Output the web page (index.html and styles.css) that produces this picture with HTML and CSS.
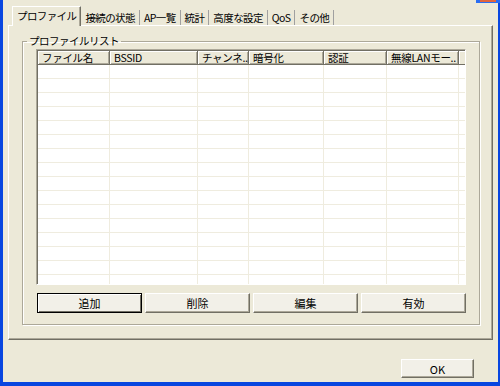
FILE: index.html
```html
<!DOCTYPE html>
<html lang="ja">
<head>
    <meta charset="UTF-8">
    <title>プロファイル</title>
    <link rel="stylesheet" href="styles.css">
</head>
<body>
    <div class="frame">
        <div class="caption-edge"><span class="close-edge"></span></div>
        <div class="window">
            <div class="tabs">
                <div class="tab active">プロファイル</div>
                <div class="tab">接続の状態</div>
                <div class="tab">AP一覧</div>
                <div class="tab">統計</div>
                <div class="tab">高度な設定</div>
                <div class="tab">QoS</div>
                <div class="tab">その他</div>
            </div>
            <div class="panel">
                <fieldset class="group">
                    <legend>プロファイルリスト</legend>
                    <div class="list">
                        <div class="list-head">
                            <div class="col c1">ファイル名</div>
                            <div class="col c2">BSSID</div>
                            <div class="col c3">チャンネ..</div>
                            <div class="col c4">暗号化</div>
                            <div class="col c5">認証</div>
                            <div class="col c6">無線LANモー..</div>
                            <div class="col c7"></div>
                        </div>
                        <div class="list-body">
                            <div class="grid-col c1"></div>
                            <div class="grid-col c2"></div>
                            <div class="grid-col c3"></div>
                            <div class="grid-col c4"></div>
                            <div class="grid-col c5"></div>
                            <div class="grid-col c6"></div>
                            <div class="grid-col c7"></div>
                        </div>
                    </div>
                    <div class="actions">
                        <button class="btn default">追加</button>
                        <button class="btn">削除</button>
                        <button class="btn">編集</button>
                        <button class="btn">有効</button>
                    </div>
                </fieldset>
            </div>
            <div class="footer">
                <button class="btn ok">OK</button>
            </div>
        </div>
    </div>
</body>
</html>
```

FILE: styles.css
```css
html, body {
    height: 386px;
    overflow: hidden;
}
body {
    margin: 0;
    padding: 0;
    font-family: "Noto Sans CJK JP", "DejaVu Sans", sans-serif;
    font-size: 11px;
    color: #000;
    background-color: #0846e0;
}
.frame {
    width: 500px;
    height: 386px;
    box-sizing: border-box;
    padding: 0 4px 4px 3px;
    background-color: #0846e0;
    position: relative;
    display: flex;
}
.caption-edge {
    position: absolute;
    top: 0;
    right: 0;
    width: 24px;
    height: 3px;
    background-color: #2a6df2;
}
.close-edge {
    position: absolute;
    top: 0;
    left: 4px;
    width: 16px;
    height: 2px;
    background-color: #e0643e;
}
.window {
    flex: 1;
    background-color: #ece9d8;
    display: flex;
    flex-direction: column;
    padding: 7px 5px 0 5px;
}
.tabs {
    display: flex;
    align-items: flex-end;
    height: 18px;
    padding-left: 4px;
    position: relative;
    z-index: 1;
}
.tab {
    height: 15px;
    line-height: 15px;
    padding: 0 4px 0 3px;
    border-right: 1px solid #a0a0a0;
    margin-right: 1px;
    white-space: nowrap;
    font-size: 10.5px;
    letter-spacing: -0.6px;
}
.tab.active {
    height: 19px;
    line-height: 17px;
    margin-bottom: -1px;
    padding: 0 4px 0 4px;
    background-color: #ece9d8;
    border-top: 1px solid #fff;
    border-left: 1px solid #fff;
    border-right: 1px solid #716f64;
    box-shadow: inset -1px 0 0 #aca899;
}
.panel {
    height: 315px;
    box-sizing: border-box;
    border-top: 1px solid #fff;
    border-left: 1px solid #fff;
    border-right: 1px solid #716f64;
    border-bottom: 1px solid #716f64;
    box-shadow: inset -1px -1px 0 #aca899;
    padding: 9px 12px 0 13px;
}
.group {
    margin: 0;
    height: 290px;
    box-sizing: border-box;
    border: 1px solid #aca899;
    box-shadow: 1px 1px 0 #fff, inset 1px 1px 0 #fff;
    padding: 2px 13px 0 13px;
}
.group legend {
    padding: 0 2px;
    margin-left: -9px;
    line-height: 12px;
    font-size: 10.5px;
    letter-spacing: -0.5px;
}
.list {
    height: 236px;
    box-sizing: border-box;
    border-top: 1px solid #aca899;
    border-left: 1px solid #aca899;
    border-right: 1px solid #fff;
    border-bottom: 1px solid #fff;
    box-shadow: inset 1px 1px 0 #716f64;
    background-color: #fff;
    display: flex;
    flex-direction: column;
    overflow: hidden;
}
.list-head {
    display: flex;
    height: 14px;
    background-color: #ece9d8;
    margin: 1px 0 0 1px;
}
.list-head .col {
    box-sizing: border-box;
    height: 14px;
    line-height: 14px;
    font-size: 10.5px;
    padding-left: 4px;
    border-right: 1px solid #716f64;
    border-bottom: 1px solid #716f64;
    box-shadow: inset 1px 1px 0 #fff, inset -1px -1px 0 #aca899;
    white-space: nowrap;
    letter-spacing: -0.3px;
}
.list-body {
    flex: 1;
    display: flex;
    margin-left: 1px;
    background-image: repeating-linear-gradient(to bottom, #fff 0, #fff 13px, #efecdf 13px, #efecdf 14px);
}
.grid-col {
    box-sizing: border-box;
    border-right: 1px solid #efecdf;
}
.c1 { width: 72px; }
.c2 { width: 88px; }
.c3 { width: 51px; }
.c4 { width: 75px; }
.c5 { width: 63px; }
.c6 { width: 72px; }
.c7 { flex: 1; border-right: none; }
.list-head .c7 { border-right: none; border-bottom: 1px solid #716f64; box-shadow: inset 1px 1px 0 #fff; }
.actions {
    display: flex;
    gap: 3px;
    margin-top: 8px;
    padding-left: 1px;
}
.btn {
    font-family: "Noto Sans CJK JP", "DejaVu Sans", sans-serif;
    font-size: 11px;
    height: 20px;
    width: 105px;
    padding: 0;
    background-color: #f2f0e8;
    border-top: 1px solid #fff;
    border-left: 1px solid #fff;
    border-right: 1px solid #716f64;
    border-bottom: 1px solid #716f64;
    box-shadow: inset -1px -1px 0 #aca899;
    color: #000;
}
.btn.default {
    border: 1px solid #000;
    box-shadow: inset 1px 1px 0 #fff, inset -1px -1px 0 #716f64;
}
.footer {
    display: flex;
    justify-content: flex-end;
    padding: 19px 19px 0 0;
}
.btn.ok {
    width: 73px;
    height: 19px;
}
```
